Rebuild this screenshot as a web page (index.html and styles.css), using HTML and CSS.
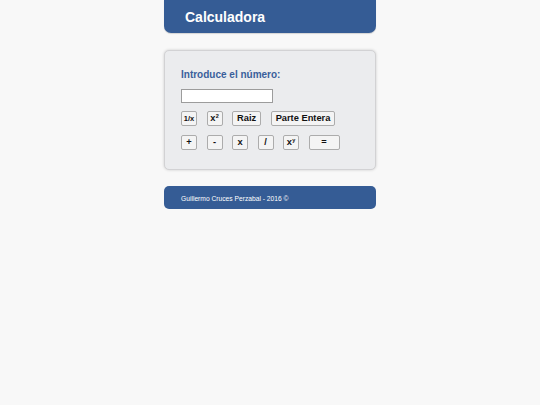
FILE: index.html
```html
<!DOCTYPE html>
<html lang="es">
<head>
<meta charset="utf-8">
<title>Calculadora</title>
<link rel="stylesheet" href="styles.css">
</head>
<body>
<div class="page">
  <header class="header"><h1 class="title">Calculadora</h1></header>
  <main class="card">
    <label class="label" for="num">Introduce el número:</label>
    <input class="input" id="num" type="text">
    <div class="row">
      <button class="btn w16 small">1/x</button>
      <button class="btn w16">x<sup class="sup">2</sup></button>
      <button class="btn">Raiz</button>
      <button class="btn">Parte Entera</button>
    </div>
    <div class="row">
      <button class="btn w16">+</button>
      <button class="btn w16">-</button>
      <button class="btn w16">x</button>
      <button class="btn w16">/</button>
      <button class="btn w16">x<sup class="sup">y</sup></button>
      <button class="btn w31">=</button>
    </div>
  </main>
  <footer class="footer">Guillermo Cruces Perzabal - 2016 ©</footer>
</div>
</body>
</html>
```
FILE: styles.css
```css
* { box-sizing: border-box; }
html, body { margin: 0; padding: 0; background: #f8f8f8; }
body { font-family: "Liberation Sans", Arial, sans-serif; }
.page { width: 212px; margin: 0 auto; display: flex; flex-direction: column; }
.header {
  height: 33px;
  background: #355c95;
  border-radius: 0 0 7px 7px;
  display: flex;
  align-items: center;
  padding-left: 21px;
  box-shadow: 0 1px 1px rgba(0,0,0,0.15);
}
.title { margin: 0; color: #fff; font-size: 14px; font-weight: bold; line-height: 1; padding-top: 1px; }
.card {
  margin-top: 17px;
  height: 120px;
  background: #ebecee;
  border: 1px solid #d2d2d4;
  border-radius: 5px;
  box-shadow: 0 0 3px rgba(0,0,0,0.18);
  padding: 18px 16px 0 16px;
  display: flex;
  flex-direction: column;
  align-items: flex-start;
}
.label { color: #3a5f9b; font-size: 10px; font-weight: bold; line-height: 12px; }
.input {
  margin-top: 8px;
  width: 92px; height: 14px;
  border: 1px solid #9c9c9c;
  background: #fff;
  padding: 0; outline: none;
}
.row { display: flex; gap: 9.5px; margin-top: 8px; }
.row + .row { margin-top: 9px; }
.btn {
  height: 15px;
  padding: 0 4px;
  margin: 0;
  border: 1px solid #acacac;
  border-radius: 2px;
  background: #f4f4f4;
  color: #111;
  font-family: "Liberation Sans", Arial, sans-serif;
  font-size: 9.3px;
  font-weight: bold;
  line-height: 13px;
  text-align: center;
  white-space: nowrap;
}
.w16 { width: 16px; padding: 0; }
.w31 { width: 31px; padding: 0; }
.small { font-size: 7.5px; }
.sup { font-size: 5.5px; line-height: 0; vertical-align: baseline; position: relative; top: -3.5px; margin-left: 0.5px; }
.footer {
  margin-top: 16px;
  height: 23px;
  background: #355c95;
  border-radius: 5px;
  color: #fff;
  font-size: 6.7px;
  display: flex; align-items: center;
  padding-left: 17px;
  padding-top: 1px;
}
```
